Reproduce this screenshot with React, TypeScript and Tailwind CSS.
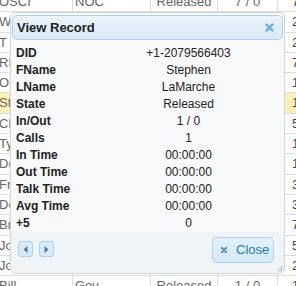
import React from 'react';

const bgRows = [
  { a: 'OSCI', b: 'NOC', c: 'Released', d: '7 / 0', e: '7' },
  { a: 'W. Lee', b: 'Sales', c: 'Released', d: '2 / 0', e: '2' },
  { a: 'T', b: 'Sales', c: 'Released', d: '2 / 0', e: '2' },
  { a: 'REBECCA', b: 'NOC', c: 'Released', d: '7 / 0', e: '7' },
  { a: 'OSCAR', b: 'NOC', c: 'Released', d: '19 / 0', e: '19' },
  { a: 'Stephen', b: 'NOC', c: 'Released', d: '1 / 0', e: '1', hl: true },
  { a: 'Chris', b: 'Sales', c: 'Released', d: '5 / 0', e: '5' },
  { a: 'Tyler', b: 'Sales', c: 'Released', d: '14 / 0', e: '14' },
  { a: 'Doug', b: 'Sales', c: 'Released', d: '1 / 0', e: '1' },
  { a: 'Fred', b: 'Sales', c: 'Released', d: '3 / 0', e: '3' },
  { a: 'Don', b: 'Sales', c: 'Released', d: '3 / 0', e: '3' },
  { a: 'Brian', b: 'Sales', c: 'Released', d: '7 / 0', e: '7' },
  { a: 'John', b: 'Sales', c: 'Released', d: '5 / 0', e: '5' },
  { a: 'Joe', b: 'Sales', c: 'Released', d: '2 / 0', e: '2' },
  { a: 'Bill', b: 'Gov', c: 'Released', d: '1 / 0', e: '1' },
];

const fields: [string, string][] = [
  ['DID', '+1-2079566403'],
  ['FName', 'Stephen'],
  ['LName', 'LaMarche'],
  ['State', 'Released'],
  ['In/Out', '1 / 0'],
  ['Calls', '1'],
  ['In Time', '00:00:00'],
  ['Out Time', '00:00:00'],
  ['Talk Time', '00:00:00'],
  ['Avg Time', '00:00:00'],
  ['+5', '0'],
];

export default function App() {
  return (
    <div className="relative w-[296px] h-[286px] overflow-hidden bg-white font-['Liberation_Sans',Arial,sans-serif]">
      {/* background grid */}
      <div className="mt-[-8px] flex flex-col">
        {bgRows.map((r, i) => (
          <div
            key={i}
            className={`grid grid-cols-[73px_78px_67px_60px_40px] h-[20.3px] border-b border-[#dcdcdc] text-[13px] leading-[19px] text-[#666] ${r.hl ? 'bg-[#fcf0b8]' : 'bg-white'}`}
          >
            <div className="border-r border-[#dcdcdc] -ml-[1px] whitespace-nowrap overflow-hidden">{r.a}</div>
            <div className="border-r border-[#dcdcdc] pl-[2px] whitespace-nowrap overflow-hidden">{r.b}</div>
            <div className="border-r border-[#dcdcdc] text-center whitespace-nowrap overflow-hidden">{r.c}</div>
            <div className="border-r border-[#dcdcdc] text-center whitespace-nowrap overflow-hidden">{r.d}</div>
            <div className="pl-[14px] text-[#444] whitespace-nowrap overflow-hidden">{r.e}</div>
          </div>
        ))}
      </div>

      {/* dialog */}
      <div className="absolute left-[10px] top-[12px] w-[275px] h-[262px] border border-[#d4d4d4] rounded-[5px] bg-[#f8f9fa] pt-[2px] px-[1px] flex flex-col overflow-hidden">
        <div className="h-[25px] shrink-0 rounded-[5px] border border-[#aed0ea] bg-gradient-to-b from-[#eaf4fb] to-[#d8e9f6] flex items-center justify-between pl-[4px] pr-[8px]">
          <span className="text-[13px] font-bold text-[#222]">View Record</span>
          <svg width="9" height="9" viewBox="0 0 9 9">
            <path d="M1.5 1.5 L7.5 7.5 M7.5 1.5 L1.5 7.5" stroke="#72a7cf" strokeWidth="2.4" strokeLinecap="round" />
          </svg>
        </div>
        <div className="flex-1 pt-[4px] pl-[4px] pr-[2px] bg-[#f8f9fa]">
          {fields.map(([k, v]) => (
            <div key={k} className="grid grid-cols-[80px_1fr] h-[17px] items-center text-[12px] text-[#222]">
              <span className="font-bold">{k}</span>
              <span className="text-center">{v}</span>
            </div>
          ))}
        </div>
        <div className="relative h-[41px] shrink-0 -mx-[1px] bg-[#f1f4f6] flex items-start justify-between pl-[7px] pr-[10px]">
          <div className="flex gap-[6px] mt-[9px]">
            <button className="w-[15px] h-[16px] rounded-[3px] border border-[#aed0ea] bg-[#d7ebf9] flex items-center justify-center">
              <svg width="5" height="7" viewBox="0 0 5 7"><path d="M4.5 0 L0.5 3.5 L4.5 7 Z" fill="#3d80b3" /></svg>
            </button>
            <button className="w-[15px] h-[16px] rounded-[3px] border border-[#aed0ea] bg-[#d7ebf9] flex items-center justify-center">
              <svg width="5" height="7" viewBox="0 0 5 7"><path d="M0.5 0 L4.5 3.5 L0.5 7 Z" fill="#3d80b3" /></svg>
            </button>
          </div>
          <button className="w-[62px] h-[26px] mt-[5px] rounded-[5px] border border-[#aed0ea] bg-gradient-to-b from-[#e2f1fb] to-[#d4e9f8] flex items-center pl-[8px] gap-[9px] text-[13px] text-[#2779aa]">
            <svg width="6" height="6" viewBox="0 0 6 6">
              <path d="M0.8 0.8 L5.2 5.2 M5.2 0.8 L0.8 5.2" stroke="#3d80b3" strokeWidth="1.8" strokeLinecap="round" />
            </svg>
            <span>Close</span>
          </button>
          <svg className="absolute right-[1px] bottom-[1px]" width="7" height="7" viewBox="0 0 7 7">
            <path d="M6.5 1 L1 6.5 M6.5 3.5 L3.5 6.5 M6.5 5.8 L5.8 6.5" stroke="#9aaab8" strokeWidth="0.9" />
          </svg>
        </div>
      </div>
    </div>
  );
}
